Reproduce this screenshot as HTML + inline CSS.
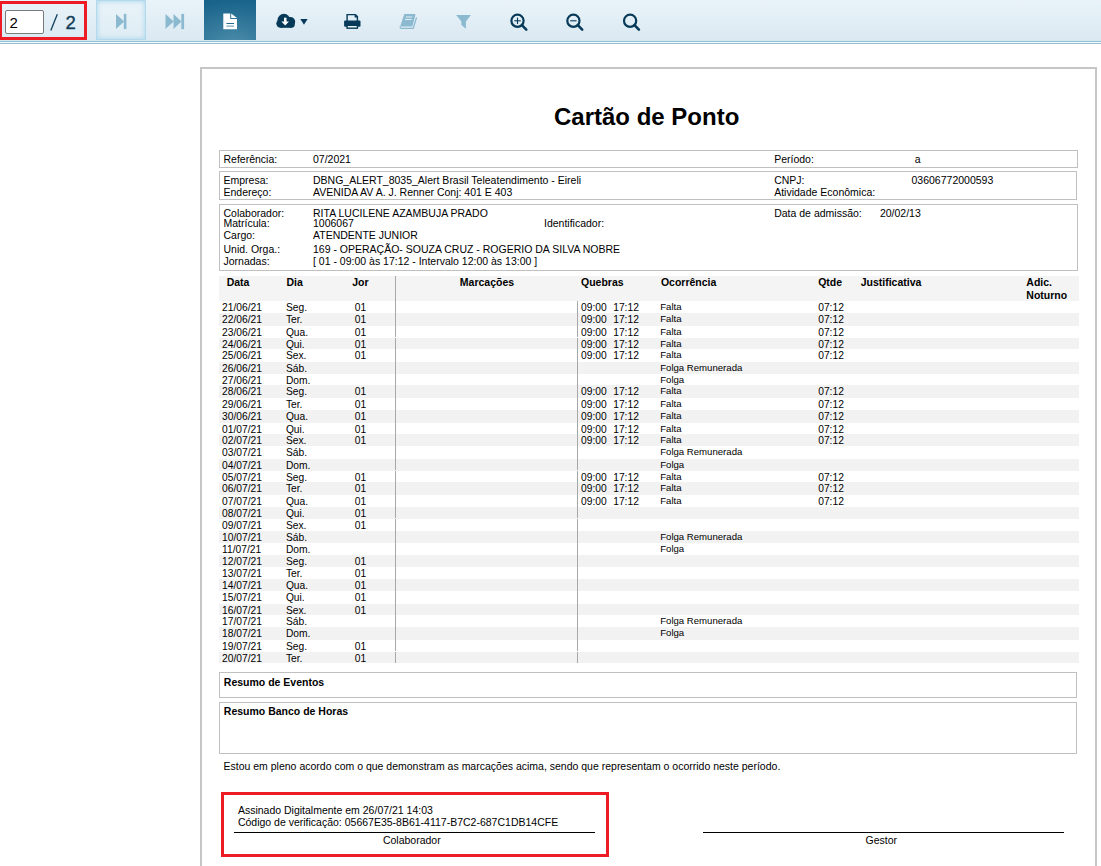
<!DOCTYPE html>
<html><head><meta charset="utf-8">
<style>
html,body{margin:0;padding:0;background:#fff;width:1101px;height:866px;overflow:hidden;position:relative;font-family:"Liberation Sans",sans-serif;color:#000}
div{position:absolute}
#tb{left:0;top:0;width:1101px;height:40px;background:linear-gradient(#e9f3f9,#dbe9f2)}
.ln{left:0;width:1101px;height:1px}
.page{left:200px;top:67px;width:893px;height:900px;border:2px solid #c6c6c6;border-bottom:none}
.box{left:219px;width:857px;border:1px solid #c0c0c0}
.t{font-size:10.5px;line-height:10px;white-space:nowrap}
.r{font-size:10.25px;line-height:13px;white-space:nowrap}
.oc{font-size:9.6px;line-height:12px;white-space:nowrap;color:#000}
.h{font-size:10.5px;line-height:13px;font-weight:bold;white-space:nowrap}
.stripe{left:219px;width:860px;background:#f2f2f2}
.vl{width:1px;background:#a8a8a8}
</style></head><body>
<div id="tb"></div>
<div style="left:96px;top:0;width:48px;height:38px;border:1px solid #b2d9ec;box-shadow:inset 0 0 4px 1px #b6dcee;background:linear-gradient(#e9f3f9,#dfecf4)"></div>
<div style="left:204px;top:0;width:52px;height:40px;background:radial-gradient(ellipse 70px 45px at 30px 45px,#4d8daa,#2f7699 55%,#19628a)"></div>
<div style="left:5px;top:10px;width:37px;height:22px;border:1px solid #7a7a7a;border-radius:2px;background:#fff"></div>
<div style="left:9.5px;top:14px;font-size:15px;line-height:17px;color:#000">2</div>
<div style="left:65.5px;top:11.5px;font-size:18.5px;line-height:22px;color:#0e3c58;-webkit-text-stroke:0.35px #0e3c58">2</div>
<svg style="position:absolute;left:0;top:0" width="80" height="40"><line x1="57.3" y1="14.3" x2="50.8" y2="30.6" stroke="#0e3c58" stroke-width="1.3"/></svg>
<svg style="position:absolute;left:0;top:0" width="700" height="40" viewBox="0 0 700 40">
<g fill="#8bbad0">
<polygon points="116,13.9 124.2,21.5 116,29.1"/><rect x="123.8" y="13.9" width="2.6" height="15.2"/>
<polygon points="165.5,13.9 173.7,21.5 165.5,29.1"/><polygon points="173.5,13.9 181.5,21.5 173.5,29.1"/><rect x="181.3" y="13.9" width="2.8" height="15.2"/>
<polygon points="456.1,15 470.9,15 465.9,21.5 465.9,28.8 461.4,25 461.4,21.5"/>
<path d="M404.3,13.9 H414.6 Q415.6,13.9 415.4,14.9 L412.6,25.6 Q412.2,26.6 411.2,26.6 H400.2 Z"/>
<path d="M400.3,26.4 Q399.9,28.4 401.6,28.3 H413.2 L416.6,17.4" fill="none" stroke="#8bbad0" stroke-width="1.3"/>
</g>
<g fill="#e4f0f6"><rect x="405.9" y="16.4" width="6.3" height="1.2" transform="skewX(-15) translate(4.5,0)"/><rect x="405.2" y="18.9" width="6.6" height="1.2" transform="skewX(-15) translate(5.1,0)"/></g>
<g fill="#fff">
<path d="M223.3,13.6 H230.2 V19 H237 V29.2 H223.3 Z"/>
<path d="M231.2,13.6 L237,18 H231.2 Z"/>
</g>
<rect x="226.4" y="23" width="7.6" height="1" fill="#236b91"/>
<rect x="226.4" y="25.6" width="7.6" height="1" fill="#5b93ad"/>
<g fill="#063a58">
<circle cx="283.9" cy="20.2" r="6.4"/><circle cx="290.4" cy="21.8" r="4.8"/><circle cx="280.5" cy="23.6" r="4.2"/><circle cx="291.5" cy="24.6" r="3.2"/>
<rect x="280.5" y="22" width="11" height="5.8"/>
<polygon points="300.3,18.9 307.6,18.9 304,24.8"/>
<rect x="344.1" y="20.4" width="16.4" height="6.3" rx="1"/>
<rect x="347.1" y="25.3" width="10.3" height="2.9" fill="#e8f3f8" stroke="#063a58" stroke-width="1.4"/>
<path d="M347.1,21 V14.6 H355.4 L357.4,16.6 V21" fill="none" stroke="#063a58" stroke-width="1.4"/>
<path d="M354.6,14.2 L358,17.6 H354.6 Z"/>

</g>
<g fill="#fff"><rect x="284" y="17.7" width="2.5" height="4.2"/><polygon points="281.4,21.4 289,21.4 285.2,25.6"/></g>
<g fill="none" stroke="#063a58">
<circle cx="517.5" cy="20.8" r="6.1" stroke-width="2.2"/><line x1="521.9" y1="25.2" x2="526.3" y2="29.6" stroke-width="2.6" stroke-linecap="round"/>
<line x1="514.3" y1="20.8" x2="520.7" y2="20.8" stroke-width="1.1"/><line x1="517.5" y1="17.6" x2="517.5" y2="24" stroke-width="1.1"/>
<circle cx="573.4" cy="20.8" r="6.1" stroke-width="2.2"/><line x1="577.8" y1="25.2" x2="582.2" y2="29.6" stroke-width="2.6" stroke-linecap="round"/>
<line x1="570.2" y1="20.8" x2="576.6" y2="20.8" stroke-width="1.1"/>
<circle cx="630.1" cy="20.8" r="6.1" stroke-width="2.2"/><line x1="634.5" y1="25.2" x2="638.9" y2="29.6" stroke-width="2.6" stroke-linecap="round"/>
</g>
</svg>
<div class="ln" style="top:40px;background:#d3e9f2"></div>
<div class="ln" style="top:41px;background:#96c0d4"></div>
<div class="ln" style="top:42px;background:#f4f9fb"></div>
<div class="ln" style="top:43px;background:#96c0d4"></div>

<div class="page"></div>
<div style="left:554px;top:102px;font-size:24px;font-weight:bold;line-height:30px;white-space:nowrap">Cartão de Ponto</div>

<div class="box" style="top:150px;height:16px"></div>
<div class="box" style="top:171px;height:27px;width:856px"></div>
<div class="box" style="top:204px;height:65px"></div>

<div class="t" style="left:223.5px;top:154px;">Referência:</div>
<div class="t" style="left:313px;top:154px;">07/2021</div>
<div class="t" style="left:774.2px;top:154px;">Período:</div>
<div class="t" style="left:914.8px;top:154px;">a</div>

<div class="t" style="left:223.5px;top:175px;">Empresa:</div>
<div class="t" style="left:313px;top:175px;">DBNG_ALERT_8035_Alert Brasil Teleatendimento - Eireli</div>
<div class="t" style="left:223.5px;top:187px;">Endereço:</div>
<div class="t" style="left:313px;top:187px;">AVENIDA AV A. J. Renner Conj: 401 E 403</div>
<div class="t" style="left:774.2px;top:175px;">CNPJ:</div>
<div class="t" style="left:911.5px;top:175px;">03606772000593</div>
<div class="t" style="left:774.2px;top:187px;">Atividade Econômica:</div>

<div class="t" style="left:223.5px;top:208px;">Colaborador:</div>
<div class="t" style="left:313px;top:208px;">RITA LUCILENE AZAMBUJA PRADO</div>
<div class="t" style="left:223.5px;top:218px;">Matrícula:</div>
<div class="t" style="left:313px;top:218px;">1006067</div>
<div class="t" style="left:544px;top:218px;">Identificador:</div>
<div class="t" style="left:223.5px;top:230px;">Cargo:</div>
<div class="t" style="left:313px;top:230px;">ATENDENTE JUNIOR</div>
<div class="t" style="left:223.5px;top:244px;">Unid. Orga.:</div>
<div class="t" style="left:313px;top:244px;">169 - OPERAÇÃO- SOUZA CRUZ - ROGERIO DA SILVA NOBRE</div>
<div class="t" style="left:223.5px;top:256px;">Jornadas:</div>
<div class="t" style="left:313px;top:256px;">[ 01 - 09:00 às 17:12 - Intervalo 12:00 às 13:00 ]</div>
<div class="t" style="left:774.2px;top:208px;">Data de admissão:</div>
<div class="t" style="left:879.9px;top:208px;">20/02/13</div>

<div class="stripe" style="top:276px;height:25px;background:#f4f4f4"></div>
<div class="h" style="left:226.7px;top:276px;">Data</div>
<div class="h" style="left:286.4px;top:276px;">Dia</div>
<div class="h" style="left:352.2px;top:276px;">Jor</div>
<div class="h" style="left:459.8px;top:276px;">Marcações</div>
<div class="h" style="left:581px;top:276px;">Quebras</div>
<div class="h" style="left:660.9px;top:276px;">Ocorrência</div>
<div class="h" style="left:818.2px;top:276px;">Qtde</div>
<div class="h" style="left:860.7px;top:276px;">Justificativa</div>
<div class="h" style="left:1026.3px;top:276px;">Adic.<br>Noturno</div>

<div class="stripe" style="top:313px;height:13px"></div>
<div class="stripe" style="top:338px;height:11px"></div>
<div class="stripe" style="top:362px;height:12px"></div>
<div class="stripe" style="top:385px;height:13px"></div>
<div class="stripe" style="top:410px;height:13px"></div>
<div class="stripe" style="top:434px;height:12px"></div>
<div class="stripe" style="top:459px;height:12px"></div>
<div class="stripe" style="top:482px;height:13px"></div>
<div class="stripe" style="top:507px;height:12px"></div>
<div class="stripe" style="top:531px;height:12px"></div>
<div class="stripe" style="top:555px;height:12px"></div>
<div class="stripe" style="top:579px;height:12px"></div>
<div class="stripe" style="top:604px;height:11px"></div>
<div class="stripe" style="top:627px;height:13px"></div>
<div class="stripe" style="top:652px;height:11px"></div>
<div class="r" style="left:222px;top:301px;">21/06/21</div>
<div class="r" style="left:285.9px;top:301px;">Seg.</div>
<div class="r" style="left:354.7px;top:301px;">01</div>
<div class="r" style="left:581px;top:301px;">09:00</div>
<div class="r" style="left:613.2px;top:301px;">17:12</div>
<div class="oc" style="left:660.2px;top:301px;">Falta</div>
<div class="r" style="left:818.2px;top:301px;">07:12</div>
<div class="r" style="left:222px;top:313px;">22/06/21</div>
<div class="r" style="left:285.9px;top:313px;">Ter.</div>
<div class="r" style="left:354.7px;top:313px;">01</div>
<div class="r" style="left:581px;top:313px;">09:00</div>
<div class="r" style="left:613.2px;top:313px;">17:12</div>
<div class="oc" style="left:660.2px;top:313px;">Falta</div>
<div class="r" style="left:818.2px;top:313px;">07:12</div>
<div class="r" style="left:222px;top:326px;">23/06/21</div>
<div class="r" style="left:285.9px;top:326px;">Qua.</div>
<div class="r" style="left:354.7px;top:326px;">01</div>
<div class="r" style="left:581px;top:326px;">09:00</div>
<div class="r" style="left:613.2px;top:326px;">17:12</div>
<div class="oc" style="left:660.2px;top:326px;">Falta</div>
<div class="r" style="left:818.2px;top:326px;">07:12</div>
<div class="r" style="left:222px;top:338px;">24/06/21</div>
<div class="r" style="left:285.9px;top:338px;">Qui.</div>
<div class="r" style="left:354.7px;top:338px;">01</div>
<div class="r" style="left:581px;top:338px;">09:00</div>
<div class="r" style="left:613.2px;top:338px;">17:12</div>
<div class="oc" style="left:660.2px;top:338px;">Falta</div>
<div class="r" style="left:818.2px;top:338px;">07:12</div>
<div class="r" style="left:222px;top:349px;">25/06/21</div>
<div class="r" style="left:285.9px;top:349px;">Sex.</div>
<div class="r" style="left:354.7px;top:349px;">01</div>
<div class="r" style="left:581px;top:349px;">09:00</div>
<div class="r" style="left:613.2px;top:349px;">17:12</div>
<div class="oc" style="left:660.2px;top:349px;">Falta</div>
<div class="r" style="left:818.2px;top:349px;">07:12</div>
<div class="r" style="left:222px;top:362px;">26/06/21</div>
<div class="r" style="left:285.9px;top:362px;">Sáb.</div>
<div class="oc" style="left:660.2px;top:362px;">Folga Remunerada</div>
<div class="r" style="left:222px;top:374px;">27/06/21</div>
<div class="r" style="left:285.9px;top:374px;">Dom.</div>
<div class="oc" style="left:660.2px;top:374px;">Folga</div>
<div class="r" style="left:222px;top:385px;">28/06/21</div>
<div class="r" style="left:285.9px;top:385px;">Seg.</div>
<div class="r" style="left:354.7px;top:385px;">01</div>
<div class="r" style="left:581px;top:385px;">09:00</div>
<div class="r" style="left:613.2px;top:385px;">17:12</div>
<div class="oc" style="left:660.2px;top:385px;">Falta</div>
<div class="r" style="left:818.2px;top:385px;">07:12</div>
<div class="r" style="left:222px;top:398px;">29/06/21</div>
<div class="r" style="left:285.9px;top:398px;">Ter.</div>
<div class="r" style="left:354.7px;top:398px;">01</div>
<div class="r" style="left:581px;top:398px;">09:00</div>
<div class="r" style="left:613.2px;top:398px;">17:12</div>
<div class="oc" style="left:660.2px;top:398px;">Falta</div>
<div class="r" style="left:818.2px;top:398px;">07:12</div>
<div class="r" style="left:222px;top:410px;">30/06/21</div>
<div class="r" style="left:285.9px;top:410px;">Qua.</div>
<div class="r" style="left:354.7px;top:410px;">01</div>
<div class="r" style="left:581px;top:410px;">09:00</div>
<div class="r" style="left:613.2px;top:410px;">17:12</div>
<div class="oc" style="left:660.2px;top:410px;">Falta</div>
<div class="r" style="left:818.2px;top:410px;">07:12</div>
<div class="r" style="left:222px;top:423px;">01/07/21</div>
<div class="r" style="left:285.9px;top:423px;">Qui.</div>
<div class="r" style="left:354.7px;top:423px;">01</div>
<div class="r" style="left:581px;top:423px;">09:00</div>
<div class="r" style="left:613.2px;top:423px;">17:12</div>
<div class="oc" style="left:660.2px;top:423px;">Falta</div>
<div class="r" style="left:818.2px;top:423px;">07:12</div>
<div class="r" style="left:222px;top:434px;">02/07/21</div>
<div class="r" style="left:285.9px;top:434px;">Sex.</div>
<div class="r" style="left:354.7px;top:434px;">01</div>
<div class="r" style="left:581px;top:434px;">09:00</div>
<div class="r" style="left:613.2px;top:434px;">17:12</div>
<div class="oc" style="left:660.2px;top:434px;">Falta</div>
<div class="r" style="left:818.2px;top:434px;">07:12</div>
<div class="r" style="left:222px;top:446px;">03/07/21</div>
<div class="r" style="left:285.9px;top:446px;">Sáb.</div>
<div class="oc" style="left:660.2px;top:446px;">Folga Remunerada</div>
<div class="r" style="left:222px;top:459px;">04/07/21</div>
<div class="r" style="left:285.9px;top:459px;">Dom.</div>
<div class="oc" style="left:660.2px;top:459px;">Folga</div>
<div class="r" style="left:222px;top:471px;">05/07/21</div>
<div class="r" style="left:285.9px;top:471px;">Seg.</div>
<div class="r" style="left:354.7px;top:471px;">01</div>
<div class="r" style="left:581px;top:471px;">09:00</div>
<div class="r" style="left:613.2px;top:471px;">17:12</div>
<div class="oc" style="left:660.2px;top:471px;">Falta</div>
<div class="r" style="left:818.2px;top:471px;">07:12</div>
<div class="r" style="left:222px;top:482px;">06/07/21</div>
<div class="r" style="left:285.9px;top:482px;">Ter.</div>
<div class="r" style="left:354.7px;top:482px;">01</div>
<div class="r" style="left:581px;top:482px;">09:00</div>
<div class="r" style="left:613.2px;top:482px;">17:12</div>
<div class="oc" style="left:660.2px;top:482px;">Falta</div>
<div class="r" style="left:818.2px;top:482px;">07:12</div>
<div class="r" style="left:222px;top:495px;">07/07/21</div>
<div class="r" style="left:285.9px;top:495px;">Qua.</div>
<div class="r" style="left:354.7px;top:495px;">01</div>
<div class="r" style="left:581px;top:495px;">09:00</div>
<div class="r" style="left:613.2px;top:495px;">17:12</div>
<div class="oc" style="left:660.2px;top:495px;">Falta</div>
<div class="r" style="left:818.2px;top:495px;">07:12</div>
<div class="r" style="left:222px;top:507px;">08/07/21</div>
<div class="r" style="left:285.9px;top:507px;">Qui.</div>
<div class="r" style="left:354.7px;top:507px;">01</div>
<div class="r" style="left:222px;top:519px;">09/07/21</div>
<div class="r" style="left:285.9px;top:519px;">Sex.</div>
<div class="r" style="left:354.7px;top:519px;">01</div>
<div class="r" style="left:222px;top:531px;">10/07/21</div>
<div class="r" style="left:285.9px;top:531px;">Sáb.</div>
<div class="oc" style="left:660.2px;top:531px;">Folga Remunerada</div>
<div class="r" style="left:222px;top:543px;">11/07/21</div>
<div class="r" style="left:285.9px;top:543px;">Dom.</div>
<div class="oc" style="left:660.2px;top:543px;">Folga</div>
<div class="r" style="left:222px;top:555px;">12/07/21</div>
<div class="r" style="left:285.9px;top:555px;">Seg.</div>
<div class="r" style="left:354.7px;top:555px;">01</div>
<div class="r" style="left:222px;top:567px;">13/07/21</div>
<div class="r" style="left:285.9px;top:567px;">Ter.</div>
<div class="r" style="left:354.7px;top:567px;">01</div>
<div class="r" style="left:222px;top:579px;">14/07/21</div>
<div class="r" style="left:285.9px;top:579px;">Qua.</div>
<div class="r" style="left:354.7px;top:579px;">01</div>
<div class="r" style="left:222px;top:591px;">15/07/21</div>
<div class="r" style="left:285.9px;top:591px;">Qui.</div>
<div class="r" style="left:354.7px;top:591px;">01</div>
<div class="r" style="left:222px;top:604px;">16/07/21</div>
<div class="r" style="left:285.9px;top:604px;">Sex.</div>
<div class="r" style="left:354.7px;top:604px;">01</div>
<div class="r" style="left:222px;top:615px;">17/07/21</div>
<div class="r" style="left:285.9px;top:615px;">Sáb.</div>
<div class="oc" style="left:660.2px;top:615px;">Folga Remunerada</div>
<div class="r" style="left:222px;top:627px;">18/07/21</div>
<div class="r" style="left:285.9px;top:627px;">Dom.</div>
<div class="oc" style="left:660.2px;top:627px;">Folga</div>
<div class="r" style="left:222px;top:640px;">19/07/21</div>
<div class="r" style="left:285.9px;top:640px;">Seg.</div>
<div class="r" style="left:354.7px;top:640px;">01</div>
<div class="r" style="left:222px;top:652px;">20/07/21</div>
<div class="r" style="left:285.9px;top:652px;">Ter.</div>
<div class="r" style="left:354.7px;top:652px;">01</div>
<div class="vl" style="left:395px;top:276px;height:61px"></div>
<div class="vl" style="left:395px;top:338px;height:132px"></div>
<div class="vl" style="left:395px;top:471px;height:47px"></div>
<div class="vl" style="left:395px;top:519px;height:132px"></div>
<div class="vl" style="left:395px;top:652px;height:11px"></div>
<div class="vl" style="left:577px;top:301px;height:36px"></div>
<div class="vl" style="left:577px;top:338px;height:132px"></div>
<div class="vl" style="left:577px;top:471px;height:47px"></div>
<div class="vl" style="left:577px;top:519px;height:132px"></div>
<div class="vl" style="left:577px;top:652px;height:11px"></div>

<div class="box" style="top:672px;height:24px;width:856px"></div>
<div class="box" style="top:702px;height:50px;width:856px"></div>
<div class="h" style="left:223.8px;top:676px;">Resumo de Eventos</div>
<div class="h" style="left:223.8px;top:705px;">Resumo Banco de Horas</div>

<div class="t" style="left:223.5px;top:761px;font-size:10.5px">Estou em pleno acordo com o que demonstram as marcações acima, sendo que representam o ocorrido neste período.</div>

<div class="t" style="left:237.9px;top:805px;font-size:10.5px">Assinado Digitalmente em 26/07/21 14:03</div>
<div class="t" style="left:237.9px;top:817px;font-size:10.5px">Código de verificação: 05667E35-8B61-4117-B7C2-687C1DB14CFE</div>
<div style="left:234px;top:832px;width:361px;height:1px;background:#000"></div>
<div class="t" style="left:382.9px;top:835px;font-size:10.5px">Colaborador</div>
<div style="left:703px;top:832px;width:361px;height:1px;background:#000"></div>
<div class="t" style="left:865.6px;top:835px;font-size:10.5px">Gestor</div>

<div style="left:221px;top:792px;width:382px;height:59px;border:3px solid #ed1c24"></div>
<div style="left:-1px;top:1px;width:82px;height:33px;border:3px solid #ed1c24"></div>
</body></html>
